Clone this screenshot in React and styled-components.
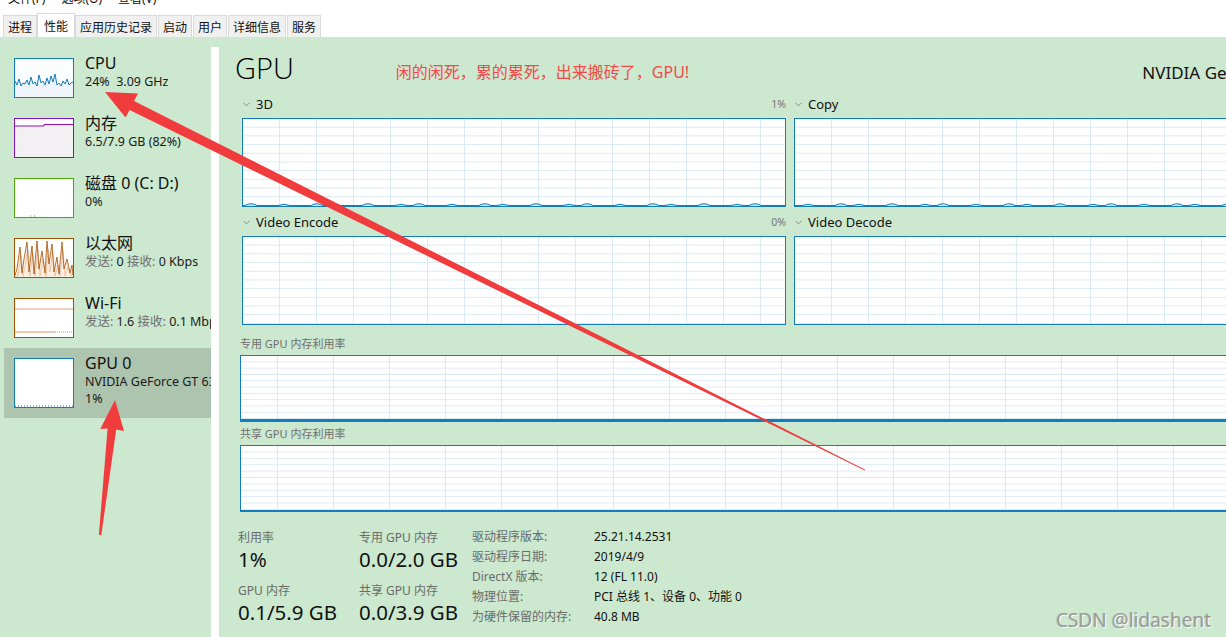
import React from 'react';
import styled, { createGlobalStyle } from 'styled-components';

const FONT = `"Noto Sans", "Noto Sans CJK SC", sans-serif`;
const GREEN = '#cce8cf';
const BLUE = '#117dbb';
const GRID = '#d9eaf4';

const GlobalStyle = createGlobalStyle`
  html, body {
    margin: 0;
    padding: 0;
    overflow: hidden;
    background: ${GREEN};
  }
`;

const Page = styled.div`
  position: relative;
  width: 1226px;
  height: 637px;
  display: flex;
  flex-direction: column;
  background: ${GREEN};
  overflow: hidden;
  font-family: ${FONT};
  color: #111;
`;

const MenuBar = styled.div`
  height: 10px;
  flex: none;
  box-sizing: border-box;
  padding: 0 0 3px 8px;
  background: #fff;
  display: flex;
  align-items: flex-end;
  gap: 16px;
  overflow: hidden;
`;

const MenuItem = styled.span`
  font-size: 12px;
  line-height: 16px;
  white-space: nowrap;
`;

const TabBar = styled.div`
  height: 27px;
  flex: none;
  box-sizing: border-box;
  padding-left: 3px;
  background: #fff;
  display: flex;
  align-items: flex-end;
  gap: 1px;
`;

const Tab = styled.div`
  box-sizing: border-box;
  height: ${p => (p.$active ? 24 : 22)}px;
  padding: 0 ${p => (p.$active ? 6 : 4)}px;
  margin: 0 ${p => (p.$active ? -1 : 0)}px;
  background: ${p => (p.$active ? '#fff' : '#f0f0f0')};
  border: 1px solid #d9d9d9;
  border-bottom: none;
  display: flex;
  align-items: center;
  font-size: 12px;
  white-space: nowrap;
  color: #111;
`;

const Body = styled.div`
  flex: 1;
  min-height: 0;
  display: flex;
`;

const Sidebar = styled.div`
  width: 211px;
  flex: none;
  box-sizing: border-box;
  padding: 11px 0 0 4px;
  display: flex;
  flex-direction: column;
  overflow: hidden;
`;

const Divider = styled.div`
  width: 8px;
  flex: none;
  margin-top: 10px;
  background: #fff;
`;

const SideItem = styled.div`
  display: flex;
  gap: 11px;
  padding: 10px 0 10px 10px;
  background: ${p => (p.$selected ? '#adc4ae' : 'transparent')};
`;

const Thumb = styled.div`
  flex: none;
  width: 60px;
  height: ${p => p.$h || 40}px;
  box-sizing: border-box;
  border: 1px solid ${p => p.$color};
  background: #fff;

  & svg {
    display: block;
    width: 100%;
    height: 100%;
  }
`;

const ItemText = styled.div`
  margin-top: -5px;
  min-width: 0;
  overflow: hidden;
  white-space: nowrap;
`;

const ItemTitle = styled.div`
  font-size: 16px;
  line-height: 20px;
  color: #111;
`;

const ItemSub = styled.div`
  font-size: 12.5px;
  line-height: 17px;
  color: #1a1a1a;
`;

const Dim = styled.span`
  color: #6e6e6e;
`;

const Main = styled.div`
  flex: 1;
  min-width: 0;
  overflow: hidden;
  padding-left: 20px;
`;

const Content = styled.div`
  width: 1091px;
`;

const Header = styled.div`
  height: 52px;
  display: flex;
  align-items: flex-start;
`;

const Title = styled.div`
  margin: 13px 0 0 -4px;
  font-family: "Open Sans", ${FONT};
  font-weight: 300;
  font-size: 29px;
  line-height: 36px;
  color: #000;
`;

const Note = styled.div`
  margin: 25px 0 0 102px;
  font-size: 16px;
  line-height: 20px;
  color: #f04a4a;
  white-space: nowrap;
`;

const Model = styled.div`
  margin: 25px 0 0 auto;
  font-size: 17px;
  line-height: 22px;
  color: #111;
  white-space: nowrap;
`;

const PaneGrid = styled.div`
  margin-left: 3px;
  display: grid;
  grid-template-columns: 544px 544px;
  column-gap: 8px;
`;

const PaneLabel = styled.div`
  height: 29px;
  box-sizing: border-box;
  padding-bottom: 5px;
  display: flex;
  align-items: flex-end;
  justify-content: space-between;
`;

const PaneName = styled.div`
  display: flex;
  align-items: center;
  gap: 6px;
  padding-left: 1px;
  font-size: 13px;
  line-height: 18px;
  color: #111;
`;

const PanePct = styled.div`
  font-size: 10.5px;
  line-height: 18px;
  color: #777;
`;

const Chart = styled.div`
  box-sizing: border-box;
  height: ${p => p.$h}px;
  border: 1px solid ${BLUE};
  border-bottom-width: ${p => p.$bottom || 1}px;
  background-color: #fff;
  background-image:
    linear-gradient(to right, transparent calc(100% - 1px), ${GRID} calc(100% - 1px)),
    linear-gradient(to bottom, transparent calc(100% - 1px), ${GRID} calc(100% - 1px));
  background-size: ${p => p.$cellW}px 100%, 100% 10%;
  background-position: ${p => p.$offX || 0}px 0, 0 0;
  display: flex;
  align-items: flex-end;

  & svg {
    display: block;
    width: 100%;
    height: 5px;
  }
`;

const MemLabel = styled.div`
  height: ${p => p.$h}px;
  box-sizing: border-box;
  padding-bottom: 4px;
  display: flex;
  align-items: flex-end;
  font-size: 11px;
  line-height: 14px;
  color: #6f6f6f;
`;

const MemBlock = styled.div`
  margin-left: 1px;
`;

const Stats = styled.div`
  display: flex;
  padding-top: 18px;
  margin-left: -1px;
`;

const StatCol = styled.div`
  width: ${p => p.$w}px;
  flex: none;
  display: flex;
  flex-direction: column;
`;

const StatLabel = styled.div`
  margin-top: ${p => p.$mt || 0}px;
  font-size: 12px;
  line-height: 16px;
  color: #6b6b6b;
  white-space: nowrap;
`;

const StatValue = styled.div`
  font-size: 20.5px;
  line-height: 26px;
  color: #111;
  white-space: nowrap;
`;

const InfoGrid = styled.div`
  margin-top: -3px;
  display: grid;
  grid-template-columns: 122px auto;
  font-size: 12px;
  line-height: 20px;
  white-space: nowrap;
`;

const InfoKey = styled.div`
  color: #6b6b6b;
`;

const InfoVal = styled.div`
  color: #111;
`;

const Watermark = styled.div`
  position: absolute;
  right: 15px;
  bottom: 5px;
  font-size: 19px;
  line-height: 24px;
  color: #9a9a9a;
  text-shadow: 1px 1px 0 rgba(255, 255, 255, 0.85), -1px 0 0 rgba(120, 120, 120, 0.25);
`;

const Overlay = styled.svg`
  position: absolute;
  left: 0;
  top: 0;
  width: 1226px;
  height: 637px;
  pointer-events: none;
`;

function Chevron() {
  return (
    <svg width="7" height="5" viewBox="0 0 7 5">
      <path d="M0.5 0.8 L3.5 3.8 L6.5 0.8" fill="none" stroke="#8a8a8a" strokeWidth="1" />
    </svg>
  );
}

const cpuYs = [22, 26, 20, 27, 24, 25, 21, 26, 18, 25, 23, 27, 16, 24, 22, 26, 19, 25, 17, 23, 15, 26, 24, 27, 22, 25, 20, 26, 24, 23];

function CpuGraph() {
  const pts = cpuYs.map((y, i) => `${i * 2},${y}`).join(' ');
  return (
    <svg viewBox="0 0 58 38" preserveAspectRatio="none">
      <rect width="58" height="38" fill="#fbfdfe" />
      <polygon points={`0,38 ${pts} 58,23 58,38`} fill="#eef4f9" />
      <polyline points={pts + ' 58,23'} fill="none" stroke={BLUE} strokeWidth="1" />
    </svg>
  );
}

function MemGraph() {
  return (
    <svg viewBox="0 0 58 38" preserveAspectRatio="none">
      <polygon points="0,7 29,7 29,5.5 58,5.5 58,38 0,38" fill="#f3f0f3" />
      <polyline points="0,7 29,7 29,5.5 58,5.5" fill="none" stroke="#8b12ae" strokeWidth="1" />
    </svg>
  );
}

function DiskGraph() {
  return (
    <svg viewBox="0 0 58 38" preserveAspectRatio="none">
      <rect x="15" y="36.5" width="1" height="1" fill="#4da60c" />
      <rect x="19" y="36.5" width="1" height="1" fill="#4da60c" />
    </svg>
  );
}

const ethSpikes = [[2, 30], [5, 8], [7, 34], [9, 20], [12, 3], [14, 33], [17, 7], [19, 35], [22, 2], [24, 30], [27, 12], [30, 34], [32, 2], [34, 25], [37, 5], [39, 33], [42, 18], [44, 35], [47, 3], [49, 30], [52, 20], [55, 34], [57, 26]];

function EthGraph() {
  const pts = ethSpikes.map(([x, y]) => `${x},${y}`).join(' ');
  const dots = ethSpikes.map(([x, y]) => `${x + 1},${Math.min(37, y + 8)}`).join(' ');
  return (
    <svg viewBox="0 0 58 38" preserveAspectRatio="none">
      <polygon points={`0,38 0,36 ${pts} 58,36 58,38`} fill="#fbeee3" />
      <polyline points={`0,36 ${dots} 58,36`} fill="none" stroke="#e0915a" strokeWidth="0.8" strokeDasharray="1 1" />
      <polyline points={`0,36 ${pts} 58,36`} fill="none" stroke="#a74f01" strokeWidth="0.8" />
    </svg>
  );
}

function WifiGraph() {
  return (
    <svg viewBox="0 0 58 38" preserveAspectRatio="none">
      <line x1="0" y1="10" x2="58" y2="10" stroke="#dfa47f" strokeWidth="1" />
      <line x1="0" y1="33" x2="40" y2="33" stroke="#d9946a" strokeWidth="1" />
      <line x1="40" y1="33" x2="58" y2="33" stroke="#d9946a" strokeWidth="1" strokeDasharray="1 1" />
    </svg>
  );
}

function GpuGraph() {
  return (
    <svg viewBox="0 0 58 48" preserveAspectRatio="none">
      <line x1="0" y1="47" x2="58" y2="47" stroke={BLUE} strokeWidth="1" strokeDasharray="1 2" />
    </svg>
  );
}

function Bumps({ seed = 0 }) {
  let d = 'M0 4.5';
  for (let i = 0; i < 19; i++) {
    const x = 8 + i * 28 + ((i + seed) % 3) * 5;
    d += ` L${x - 6} 4.5 Q${x} ${1 + ((i + seed) % 2)} ${x + 6} 4.5`;
  }
  d += ' L544 4.5';
  return (
    <svg viewBox="0 0 542 5" preserveAspectRatio="none">
      <path d={d + ' L544 5 L0 5 Z'} fill="#d4e7f3" stroke="none" />
      <path d={d} fill="none" stroke={BLUE} strokeWidth="1" />
    </svg>
  );
}

function Pane({ name, pct, bumps, seed }) {
  return (
    <div>
      <PaneLabel>
        <PaneName>
          <Chevron />
          <span>{name}</span>
        </PaneName>
        <PanePct>{pct}</PanePct>
      </PaneLabel>
      <Chart $h={89} $cellW={37}>{bumps && <Bumps seed={seed} />}</Chart>
    </div>
  );
}

function Arrows() {
  return (
    <Overlay viewBox="0 0 1226 637">
      <polygon
        points="105,92 138,93.5 134,101 865.3,469.7 864.8,470.4 129.6,110 125.5,117.5"
        fill="#f03c3c"
      />
      <polygon
        points="115,400 124,431 116.2,429.4 101.3,535.2 98.9,534.8 107.6,428.5 100.3,429"
        fill="#f03c3c"
      />
    </Overlay>
  );
}

export default function App() {
  return (
    <Page>
      <GlobalStyle />
      <MenuBar>
        <MenuItem>文件(F)</MenuItem>
        <MenuItem>选项(O)</MenuItem>
        <MenuItem>查看(V)</MenuItem>
      </MenuBar>
      <TabBar>
        <Tab>进程</Tab>
        <Tab $active>性能</Tab>
        <Tab>应用历史记录</Tab>
        <Tab>启动</Tab>
        <Tab>用户</Tab>
        <Tab>详细信息</Tab>
        <Tab>服务</Tab>
      </TabBar>
      <Body>
        <Sidebar>
          <SideItem>
            <Thumb $color={BLUE}><CpuGraph /></Thumb>
            <ItemText>
              <ItemTitle>CPU</ItemTitle>
              <ItemSub>24%&nbsp; 3.09 GHz</ItemSub>
            </ItemText>
          </SideItem>
          <SideItem>
            <Thumb $color="#8b12ae"><MemGraph /></Thumb>
            <ItemText>
              <ItemTitle>内存</ItemTitle>
              <ItemSub>6.5/7.9 GB (82%)</ItemSub>
            </ItemText>
          </SideItem>
          <SideItem>
            <Thumb $color="#4da60c"><DiskGraph /></Thumb>
            <ItemText>
              <ItemTitle>磁盘 0 (C: D:)</ItemTitle>
              <ItemSub>0%</ItemSub>
            </ItemText>
          </SideItem>
          <SideItem>
            <Thumb $color="#a74f01"><EthGraph /></Thumb>
            <ItemText>
              <ItemTitle>以太网</ItemTitle>
              <ItemSub><Dim>发送:</Dim> 0 <Dim>接收:</Dim> 0 Kbps</ItemSub>
            </ItemText>
          </SideItem>
          <SideItem>
            <Thumb $color="#a74f01"><WifiGraph /></Thumb>
            <ItemText>
              <ItemTitle>Wi-Fi</ItemTitle>
              <ItemSub><Dim>发送:</Dim> 1.6 <Dim>接收:</Dim> 0.1 Mbps</ItemSub>
            </ItemText>
          </SideItem>
          <SideItem $selected>
            <Thumb $color={BLUE} $h={50}><GpuGraph /></Thumb>
            <ItemText>
              <ItemTitle>GPU 0</ItemTitle>
              <ItemSub>NVIDIA GeForce GT 630</ItemSub>
              <ItemSub>1%</ItemSub>
            </ItemText>
          </SideItem>
        </Sidebar>
        <Divider />
        <Main>
          <Content>
            <Header>
              <Title>GPU</Title>
              <Note>闲的闲死，累的累死，出来搬砖了，GPU!</Note>
              <Model>NVIDIA GeForce GT 630</Model>
            </Header>
            <PaneGrid>
              <Pane name="3D" pct="1%" bumps seed={0} />
              <Pane name="Copy" pct="0%" bumps seed={1} />
              <Pane name="Video Encode" pct="0%" />
              <Pane name="Video Decode" pct="0%" />
            </PaneGrid>
            <MemBlock>
              <MemLabel $h={30}>专用 GPU 内存利用率</MemLabel>
              <Chart $h={67} $bottom={3} $cellW={56} $offX={-19} />
              <MemLabel $h={23}>共享 GPU 内存利用率</MemLabel>
              <Chart $h={67} $bottom={2} $cellW={56} $offX={-19} />
            </MemBlock>
            <Stats>
              <StatCol $w={121}>
                <StatLabel>利用率</StatLabel>
                <StatValue>1%</StatValue>
                <StatLabel $mt={11}>GPU 内存</StatLabel>
                <StatValue>0.1/5.9 GB</StatValue>
              </StatCol>
              <StatCol $w={113}>
                <StatLabel>专用 GPU 内存</StatLabel>
                <StatValue>0.0/2.0 GB</StatValue>
                <StatLabel $mt={11}>共享 GPU 内存</StatLabel>
                <StatValue>0.0/3.9 GB</StatValue>
              </StatCol>
              <StatCol $w={400}>
                <InfoGrid>
                  <InfoKey>驱动程序版本:</InfoKey>
                  <InfoVal>25.21.14.2531</InfoVal>
                  <InfoKey>驱动程序日期:</InfoKey>
                  <InfoVal>2019/4/9</InfoVal>
                  <InfoKey>DirectX 版本:</InfoKey>
                  <InfoVal>12 (FL 11.0)</InfoVal>
                  <InfoKey>物理位置:</InfoKey>
                  <InfoVal>PCI 总线 1、设备 0、功能 0</InfoVal>
                  <InfoKey>为硬件保留的内存:</InfoKey>
                  <InfoVal>40.8 MB</InfoVal>
                </InfoGrid>
              </StatCol>
            </Stats>
          </Content>
        </Main>
      </Body>
      <Watermark>CSDN @lidashent</Watermark>
      <Arrows />
    </Page>
  );
}
